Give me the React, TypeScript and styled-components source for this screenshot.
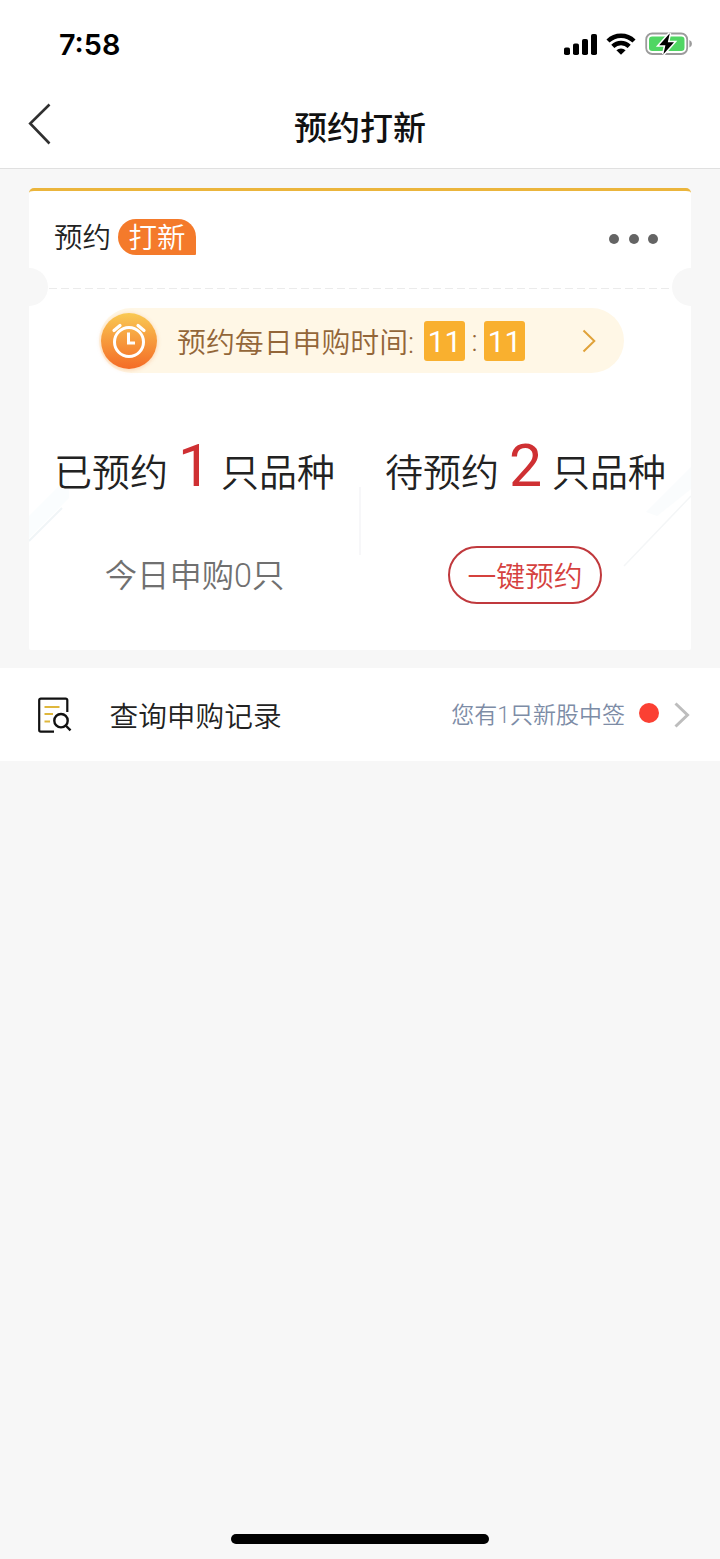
import React from 'react';
import styled, { createGlobalStyle } from 'styled-components';

const GlobalStyle = createGlobalStyle`
  * { box-sizing: border-box; }
  body { margin: 0; background: #f7f7f7; }
`;

const cjk = `'Noto Sans CJK SC', sans-serif`;

const Screen = styled.div`
  width: 720px;
  height: 1559px;
  display: flex;
  flex-direction: column;
  background: #f7f7f7;
  font-family: Roboto, ${cjk};
  font-weight: 350;
  color: #222;
  white-space: nowrap;
  overflow: hidden;
`;

const StatusBar = styled.header`
  height: 88px;
  flex: none;
  padding: 0 27px 0 59px;
  display: flex;
  justify-content: space-between;
  align-items: center;
  background: #fff;
`;

const Clock = styled.time`
  padding-top: 1px;
  font: 600 28.8px/34px Inter, sans-serif;
  color: #000;
`;

const StatusIcons = styled.div`
  display: flex;
  align-items: center;
  gap: 9px;
  svg { display: block; }
`;

const NavBar = styled.nav`
  height: 81px;
  flex: none;
  padding: 0 28px;
  display: grid;
  grid-template-columns: 60px 1fr 60px;
  align-items: center;
  background: #fff;
  border-bottom: 1px solid #e0e0e0;
`;

const BackButton = styled.button`
  padding: 0;
  border: 0;
  background: none;
  height: 42px;
  margin-top: -9px;
  svg { display: block; }
`;

const Title = styled.h1`
  margin: -5px 0 0;
  text-align: center;
  font: 500 33px/48px ${cjk};
  color: #111;
`;

const Card = styled.section`
  position: relative;
  height: 462px;
  flex: none;
  margin: 19px 29px 0;
  background: #fff;
  border-radius: 5px 5px 2px 2px;
  overflow: hidden;
  display: flex;
  flex-direction: column;
  border-top: 3px solid #ebb53c;
`;

const CardHead = styled.div`
  height: 97px;
  flex: none;
  display: flex;
  align-items: flex-start;
  justify-content: space-between;
  padding: 28px 33px 0 25px;
`;

const Brand = styled.div`
  display: flex;
  align-items: center;
  gap: 7px;
  font-size: 28.5px;
  line-height: 40px;
`;

const Tag = styled.span`
  width: 78px;
  height: 36px;
  margin-bottom: 4px;
  border-radius: 18px 18px 1px 18px;
  background: #f47a2b;
  color: #fff;
  text-align: center;
`;

const More = styled.div`
  display: flex;
  gap: 9.4px;
  padding-top: 15px;
`;

const Dot = styled.i<{ $size: number; $color: string }>`
  display: block;
  width: ${(p) => p.$size}px;
  height: ${(p) => p.$size}px;
  border-radius: 50%;
  background: ${(p) => p.$color};
`;

const Perforation = styled.div`
  height: 1px;
  flex: none;
  margin: 0 20px;
  background: repeating-linear-gradient(90deg, #ebebeb 0 8px, transparent 8px 12px);
`;

const Notch = styled.i<{ $side: 'left' | 'right' }>`
  position: absolute;
  top: 77px;
  ${(p) => p.$side}: -19px;
  width: 38px;
  height: 38px;
  border-radius: 50%;
  background: #f7f7f7;
`;

const Decoration = styled.svg`
  position: absolute;
  left: 0;
  top: 269px;
`;

const Reminder = styled.div`
  position: relative;
  height: 65px;
  flex: none;
  width: 525px;
  margin: 19px 0 0 70px;
  padding: 0 28px 0 1.5px;
  border-radius: 33px;
  background: #fff7e6;
  display: flex;
  align-items: center;
  color: #936639;
  font-size: 29px;
  line-height: 42px;
`;

const AlarmBadge = styled.span`
  width: 56px;
  height: 56px;
  border-radius: 50%;
  background: linear-gradient(#f9c953, #f46b26);
  box-shadow: 0 1px 4px rgba(244, 130, 50, 0.35);
  margin-right: 20.500px;
`;

const ReminderLabel = styled.span`
  width: 247px;
  padding-top: 4px;
  font-size: 28.9px;
`;

const TimeTile = styled.span`
  width: 41px;
  height: 40px;
  border-radius: 3px;
  background: #f9b02f;
  color: #fff;
  text-align: center;
  font: 400 30px/41px Roboto, sans-serif;
`;

const Colon = styled.span`
  width: 19px;
  text-align: center;
`;

const ReminderArrow = styled.svg`
  margin-left: auto;
`;

const Columns = styled.div`
  position: relative;
  flex: 1;
  display: grid;
  grid-template-columns: 1fr 1fr;
`;

const Column = styled.div`
  display: flex;
  flex-direction: column;
  align-items: center;
  padding-top: 58px;
`;

const Divider = styled.i`
  position: absolute;
  left: 330px;
  top: 114px;
  width: 2px;
  height: 68px;
  background: #f7f7f9;
`;

const Summary = styled.p`
  margin: 0;
  height: 70px;
  display: flex;
  align-items: baseline;
  font-size: 38px;
  line-height: 70px;
`;

const Count = styled.strong`
  width: 53px;
  text-align: center;
  font: 400 59px/70px Roboto, sans-serif;
  color: #cf3033;
`;

const Today = styled.p`
  margin: 51px 0 0;
  font-size: 32.3px;
  line-height: 48px;
  color: #707070;
`;

const BookButton = styled.button`
  width: 154px;
  height: 58px;
  margin: 45px 1px 0 0;
  padding: 0;
  border: 2px solid #c0393d;
  border-radius: 29px;
  background: #fff;
  color: #d5413e;
  font: 350 28.8px/50px ${cjk};
`;

const RecordRow = styled.section`
  height: 93px;
  flex: none;
  margin-top: 18px;
  padding: 0 30px 0 38px;
  background: #fff;
  display: flex;
  align-items: center;

  > i { margin-bottom: 3px; }
`;

const RecordLabel = styled.span`
  margin-left: 37.500px;
  padding-top: 4px;
  font-size: 28.7px;
  line-height: 42px;
`;

const RecordNote = styled.span`
  margin: 0 14px 0 auto;
  padding-top: 2px;
  font-size: 23px;
  line-height: 34px;
  color: #7d8ca6;
`;

const RecordArrow = styled.svg`
  margin-left: 15px;
`;

const HomeIndicator = styled.div`
  width: 258px;
  height: 10px;
  margin: auto auto 15px;
  border-radius: 5px;
  background: #000;
`;

const SignalIcon = () => (
  <svg width="33" height="21" viewBox="0 0 33 21">
    <rect x="0" y="13.5" width="6" height="7.5" rx="1.8" />
    <rect x="9" y="9.5" width="6" height="11.5" rx="1.8" />
    <rect x="18" y="5" width="6" height="16" rx="1.8" />
    <rect x="27" y="0" width="6" height="21" rx="1.8" />
  </svg>
);

const WifiIcon = () => (
  <svg width="30" height="22" viewBox="0 0 30 22">
    <g fill="none" stroke="#000" strokeWidth="4.4">
      <path d="M2 8a18.6 18.6 0 0 1 26 0" />
      <path d="M6.8 13.3a11.8 11.8 0 0 1 16.4 0" />
    </g>
    <path d="M10.4 17.3a7 7 0 0 1 9.200 0L15 21.800z" />
  </svg>
);

const BatteryIcon = () => (
  <svg width="48" height="24" viewBox="0 0 48 24">
    <rect x="1.200" y="1.500" width="41" height="20.5" rx="6" fill="#fff" stroke="#9b9b9b" strokeWidth="1.8" />
    <rect x="4" y="4.5" width="35.500" height="14.5" rx="3.2" fill="#50d663" />
    <path d="M44.4 8q2.6 1 2.6 3.8t-2.6 3.8z" fill="#9b9b9b" />
    <path d="M24.8 1.2 14.2 13.2h6.2l-2 9L29 10.2h-6.2z" fill="#000" stroke="#fff" strokeWidth="3" paintOrder="stroke" />
  </svg>
);

const AlarmIcon = () => (
  <svg width="56" height="56" viewBox="0 0 56 56" fill="none" stroke="#fff" strokeWidth="3" strokeLinecap="round">
    <circle cx="28" cy="29" r="14.5" />
    <path d="M27.5 19.5V30H34" strokeLinecap="butt" />
    <path d="M13 17.5l6-5M43 17.5l-6-5" strokeWidth="3.2" />
  </svg>
);

const RecordIcon = () => (
  <svg width="34" height="36" viewBox="0 0 34 36" fill="none" strokeWidth="2.2" strokeLinecap="butt">
    <path d="M16 34.700H2.800a1.600 1.600 0 0 1-1.600-1.600V3.200A1.600 1.600 0 0 1 2.800 1.600H27.700A1.600 1.600 0 0 1 29.300 3.200V15" stroke="#111" />
    <path d="M6.500 10h15M6.500 17h8.500M6.500 24.500h5.500" stroke="#dfb73c" />
    <circle cx="23" cy="23.700" r="6.700" stroke="#111" strokeWidth="2.400" />
    <path d="M27.700 28.500l4.800 4.900" stroke="#111" strokeWidth="2.400" />
  </svg>
);

export default function App() {
  return (
    <Screen>
      <GlobalStyle />
      <StatusBar>
        <Clock>7:58</Clock>
        <StatusIcons>
          <SignalIcon />
          <WifiIcon />
          <BatteryIcon />
        </StatusIcons>
      </StatusBar>
      <NavBar>
        <BackButton aria-label="返回">
          <svg width="24" height="42" viewBox="0 0 24 42" fill="none" stroke="#303030" strokeWidth="2.6">
            <path d="M21.500 1.500 2.200 20.500 21.500 40.500" />
          </svg>
        </BackButton>
        <Title>预约打新</Title>
      </NavBar>

      <Card>
        <Notch $side="left" />
        <Notch $side="right" />
        <Decoration width="662" height="120" viewBox="0 0 662 120">
          <path d="M0 56 40 16V38L0 78z" fill="#fafdfe" />
          <path d="M0 81 33 48" stroke="#f0f5f7" strokeWidth="2" />
          <path d="M617 52 662 7V29L628 56z" fill="#fafcfd" />
          <path d="M595 106 662 36" stroke="#f4f6f7" strokeWidth="1.500" />
        </Decoration>
        <CardHead>
          <Brand>
            预约<Tag>打新</Tag>
          </Brand>
          <More>
            <Dot $size={10} $color="#646464" />
            <Dot $size={10} $color="#646464" />
            <Dot $size={10} $color="#646464" />
          </More>
        </CardHead>
        <Perforation />
        <Reminder>
          <AlarmBadge>
            <AlarmIcon />
          </AlarmBadge>
          <ReminderLabel>预约每日申购时间:</ReminderLabel>
          <TimeTile>11</TimeTile>
          <Colon>:</Colon>
          <TimeTile>11</TimeTile>
          <ReminderArrow width="14" height="24" viewBox="0 0 14 24" fill="none" stroke="#e0a23a" strokeWidth="2">
            <path d="M1.500 1.500 12.300 12 1.500 22.500" />
          </ReminderArrow>
        </Reminder>
        <Columns>
          <Divider />
          <Column>
            <Summary>
              已预约<Count>1</Count>只品种
            </Summary>
            <Today>今日申购0只</Today>
          </Column>
          <Column>
            <Summary>
              待预约<Count>2</Count>只品种
            </Summary>
            <BookButton>一键预约</BookButton>
          </Column>
        </Columns>
      </Card>

      <RecordRow>
        <RecordIcon />
        <RecordLabel>查询申购记录</RecordLabel>
        <RecordNote>您有1只新股中签</RecordNote>
        <Dot $size={20} $color="#fb4033" />
        <RecordArrow width="16" height="26" viewBox="0 0 16 26" fill="none" stroke="#bdbdbd" strokeWidth="3">
          <path d="M1.500 1.500 13.500 13 1.500 24.500" />
        </RecordArrow>
      </RecordRow>
      <HomeIndicator />
    </Screen>
  );
}
